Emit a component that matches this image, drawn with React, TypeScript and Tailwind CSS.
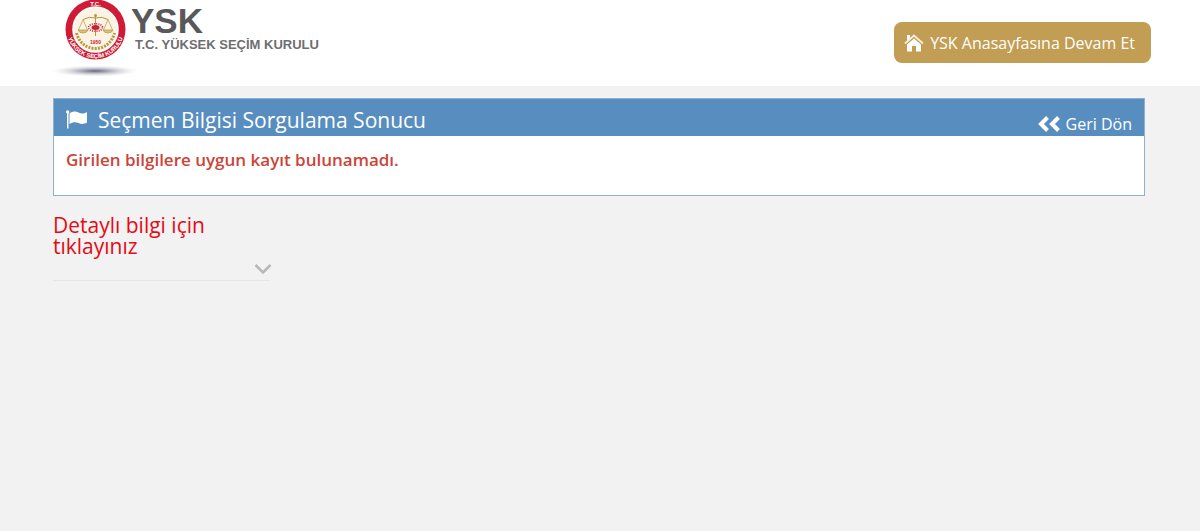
interface IconProps {
  className?: string;
}

function Emblem() {
  return (
    <svg className="h-[78px] w-[94px] shrink-0" viewBox="0 0 94 78" role="img" aria-label="YSK">
      <defs>
        <radialGradient id="shadow">
          <stop offset="0" stopColor="#5c5c78" stopOpacity="0.95" />
          <stop offset="0.35" stopColor="#85859a" stopOpacity="0.6" />
          <stop offset="0.75" stopColor="#c8c8cc" stopOpacity="0.25" />
          <stop offset="1" stopColor="#ffffff" stopOpacity="0" />
        </radialGradient>
        <path id="ring" d="M18.2 25.5A28.6 28.6 0 1 0 74.8 25.5" />
      </defs>
      <ellipse cx="46" cy="71" rx="46" ry="6" fill="url(#shadow)" />
      <circle cx="46.5" cy="29.5" r="30" fill="#d01b36" />
      <circle cx="46.5" cy="29.5" r="22.5" fill="#fbf3e4" stroke="#ffffff" strokeWidth="1.5" />
      <g fill="none" stroke="#b9973f" strokeWidth="1">
        <path d="M46.5 16V36M34 19.5Q40 16 46.5 18Q53 16 59 19.5" />
        <path d="M34 19.5L29.5 30M34 19.5L38.5 30M59 19.5L54.5 30M59 19.5L63.5 30" strokeWidth="0.7" />
        <path d="M29 30h10q-1 3-5 3t-5-3zM54 30h10q-1 3-5 3t-5-3z" fill="#d9c07a" strokeWidth="0.7" />
        <path d="M27.5 33C30 43 38 48.5 46.5 48.5S63 43 65.5 33" strokeWidth="3" strokeDasharray="2 1.2" />
      </g>
      <circle cx="46.5" cy="15.5" r="1.5" fill="#b9973f" />
      <ellipse cx="46.5" cy="27.5" rx="4" ry="2.5" fill="#d01b36" />
      <ellipse cx="46.5" cy="27.5" rx="7" ry="3.8" fill="none" stroke="#d01b36" strokeWidth="1.6" strokeDasharray="1 1.2" />
      <text x="46.5" y="43.5" textAnchor="middle" fill="#d01b36" className="font-['Liberation_Sans'] text-[5px] font-bold">
        1950
      </text>
      <text x="46.5" y="6" textAnchor="middle" fill="#ffffff" className="font-['Liberation_Sans'] text-[6px] font-bold">
        T.C.
      </text>
      <text fill="#ffffff" className="font-['Liberation_Sans'] text-[6px] font-bold">
        <textPath href="#ring" startOffset="50%" textAnchor="middle">
          YÜKSEK SEÇİM KURULU
        </textPath>
      </text>
    </svg>
  );
}

function HomeIcon({ className }: IconProps) {
  return (
    <svg className={className} viewBox="0 0 20 18" aria-hidden="true">
      <path d="M3 1h3v4L3 8z" fill="#fff" />
      <path d="M1 9.5L10 1.5L19 9.5" fill="none" stroke="#f7eedb" strokeWidth="1.8" />
      <path d="M3 10.5L10 4.5L17 10.5V17.5H12V12H8V17.5H3z" fill="#fff" />
    </svg>
  );
}

function FlagIcon({ className }: IconProps) {
  return (
    <svg className={className} viewBox="0 0 22 19" fill="#fff" aria-hidden="true">
      <circle cx="1.7" cy="1.9" r="1.7" />
      <path d="M1 2h1.5v16.5H1z" />
      <path d="M3.5 3.5C7 1 9.5 1 12.5 2.5S17.5 4 21 2V12.5C17.5 14.5 15 14 12.5 13S7 11.5 3.5 14z" />
    </svg>
  );
}

function BackIcon({ className }: IconProps) {
  return (
    <svg className={className} viewBox="0 0 22 16" fill="none" stroke="#fff" strokeWidth="4" aria-hidden="true">
      <path d="M9.5 1.5L3 8L9.5 14.5M20.5 1.5L14 8L20.5 14.5" />
    </svg>
  );
}

export default function App() {
  return (
    <div className="min-h-screen bg-[#f2f2f2] font-['Open_Sans',sans-serif]">
      <header className="flex h-[86px] items-start justify-between bg-white px-[49px]">
        <a href="#" className="flex items-start font-['Liberation_Sans',sans-serif] text-[#58585a]">
          <Emblem />
          <span className="-ml-3 flex flex-col pt-1">
            <span className="text-[35px] leading-[34px] font-bold">YSK</span>
            <span className="pl-1 text-[13px] leading-[14px] font-bold text-[#6e6e70]">T.C. YÜKSEK SEÇİM KURULU</span>
          </span>
        </a>
        <a
          href="#"
          className="mt-[22px] flex h-[41px] items-center gap-1.5 rounded-lg bg-[#c29d54] pr-4 pl-2.5 text-base text-white"
        >
          <HomeIcon className="h-[18px] w-5" />
          YSK Anasayfasına Devam Et
        </a>
      </header>

      <main className="pt-3 pr-[55px] pl-[53px]">
        <section className="border border-[#8fb0cd] bg-white">
          <div className="flex h-[37px] items-center justify-between bg-[#588ebf] px-3 text-white">
            <h1 className="flex items-center gap-2.5 pt-1 text-[21px] leading-[28px]">
              <FlagIcon className="h-[19px] w-[22px]" />
              Seçmen Bilgisi Sorgulama Sonucu
            </h1>
            <a href="#" className="flex items-center gap-1.5 pt-3 text-base leading-5">
              <BackIcon className="h-4 w-[22px]" />
              Geri Dön
            </a>
          </div>
          <p className="h-[59px] px-3 pt-3 text-[17px] leading-6 font-semibold text-[#cb4437]">
            Girilen bilgilere uygun kayıt bulunamadı.
          </p>
        </section>

        <button type="button" className="mt-[19px] block w-[217px] border-b border-[#e6e6e6] pb-[3px] text-left">
          <span className="block w-[180px] text-[21px] leading-[21px] text-[#e60a14]">Detaylı bilgi için tıklayınız</span>
          <svg
            className="mt-1 -mr-0.5 ml-auto h-4 w-[18px]"
            viewBox="0 0 18 16"
            fill="none"
            stroke="#b8b8b8"
            strokeWidth="2.5"
            aria-hidden="true"
          >
            <path d="M1.5 4L9 11.5L16.5 4" />
          </svg>
        </button>
      </main>
    </div>
  );
}
